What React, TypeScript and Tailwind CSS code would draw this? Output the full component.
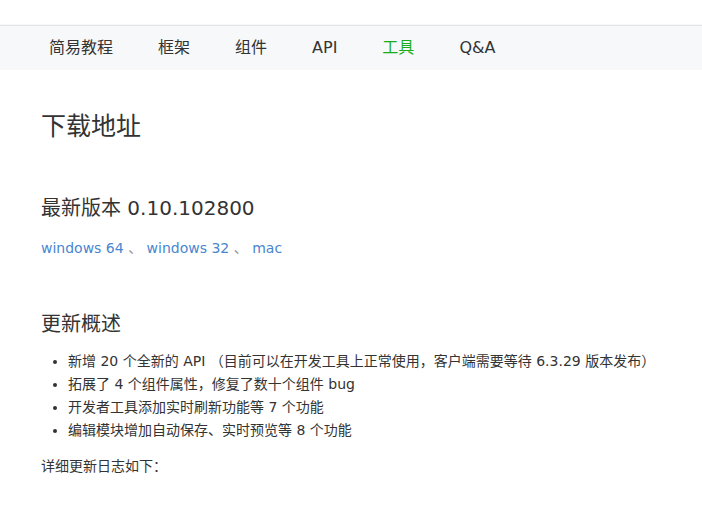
import React from 'react';

const navItems = ['简易教程', '框架', '组件', 'API', '工具', 'Q&A'];

const summary = [
  '新增 20 个全新的 API （目前可以在开发工具上正常使用，客户端需要等待 6.3.29 版本发布）',
  '拓展了 4 个组件属性，修复了数十个组件 bug',
  '开发者工具添加实时刷新功能等 7 个功能',
  '编辑模块增加自动保存、实时预览等 8 个功能',
];

export default function App() {
  return (
    <div
      className="min-h-[506px] w-full bg-white text-[#333]"
      style={{ fontFamily: '"DejaVu Sans", "Noto Sans CJK SC", sans-serif' }}
    >
      <div className="h-[25px] bg-white" />
      <nav className="flex h-[45px] items-center gap-[45px] border-t border-[#e3e4e6] bg-[#f6f8f9] pl-[49px] text-[16px] leading-[22px] shadow-[0_-1px_1px_rgba(0,0,0,0.03)]">
        {navItems.map((item) => (
          <span key={item} className={item === '工具' ? 'text-[#1aad19]' : 'text-[#333]'}>
            {item}
          </span>
        ))}
      </nav>

      <main className="pl-[41px] pr-4">
        <h1 className="mt-[39px] text-[25px] leading-[35px] font-normal">下载地址</h1>

        <h3 className="mt-[50px] text-[20px] leading-[28px] font-normal">最新版本 0.10.102800</h3>
        <div className="mt-[16px] text-[14px] leading-[20px] text-[#4a86cf]">
          <a href="#">windows 64</a>
          <span className="text-[#999]"> 、 </span>
          <a href="#">windows 32</a>
          <span className="text-[#999]"> 、 </span>
          <a href="#">mac</a>
        </div>

        <h3 className="mt-[52px] text-[20px] leading-[28px] font-normal">更新概述</h3>
        <ul className="mt-[12px] list-disc pl-[27px] text-[14px] leading-[23px]">
          {summary.map((line) => (
            <li key={line}>{line}</li>
          ))}
        </ul>
        <p className="mt-[13px] text-[14px] leading-[23px]">详细更新日志如下：</p>
      </main>
    </div>
  );
}
